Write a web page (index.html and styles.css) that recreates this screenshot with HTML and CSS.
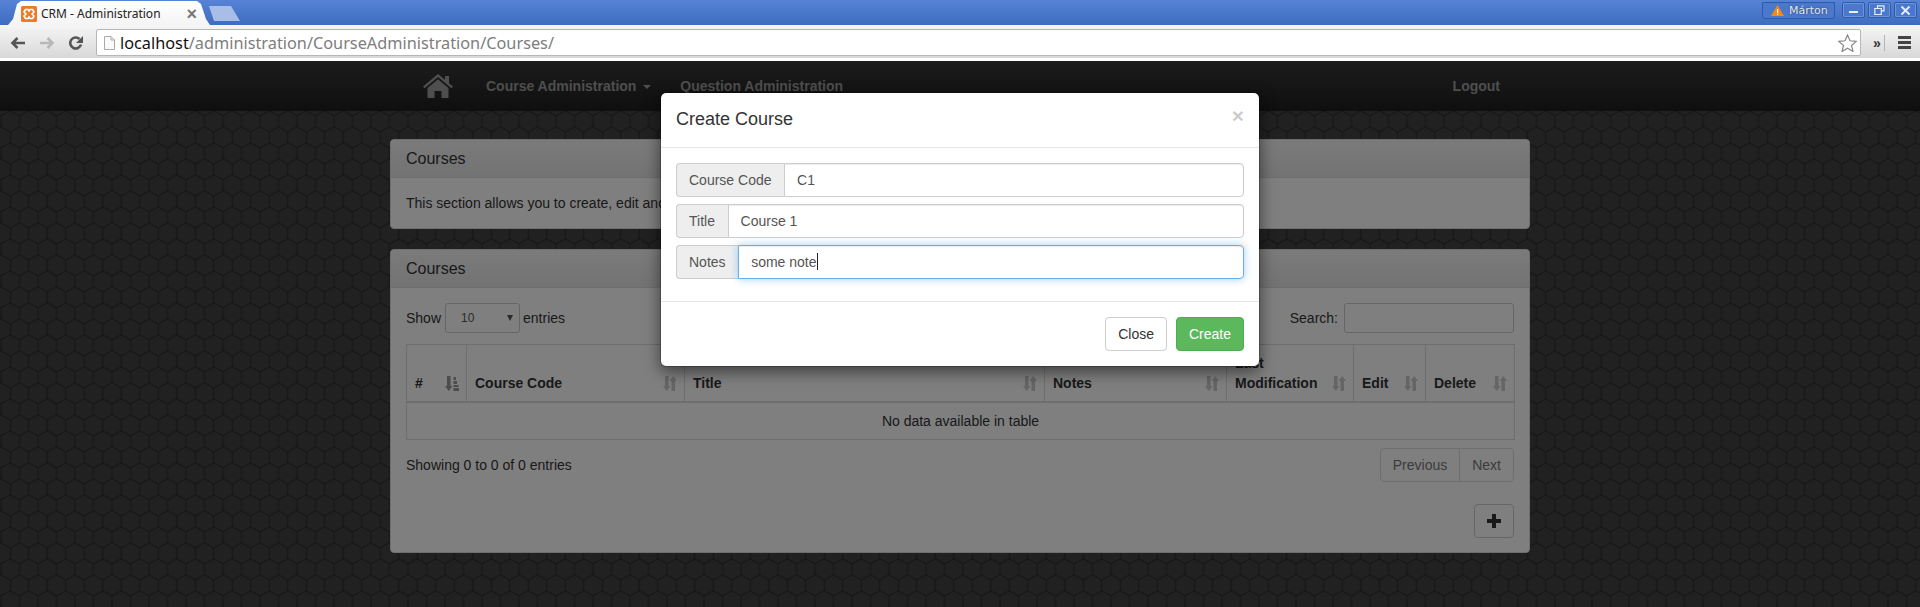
FILE: index.html
```html
<!DOCTYPE html>
<html lang="en">
<head>
  <meta charset="UTF-8" />
  <title>CRM - Administration</title>
  <link rel="stylesheet" href="styles.css">
</head>
<body>
  <div class="browser">
    <div class="tabbar">
      <div class="tab">
        <svg class="favicon" viewBox="0 0 16 16">
          <rect width="16" height="16" rx="1.5" fill="#ee7a26"/>
          <path d="M4.500 3.500H7L8 5l1-1.500h2.500L13 6l-2 2 2 2-1.500 2.500H9L8 11l-1 1.500H4.500L3 10l2-2-2-2z" fill="none" stroke="#fff" stroke-width="1.600"/>
        </svg>
        <span class="tab-title">CRM - Administration</span>
        <span class="tab-close">×</span>
      </div>
      <div class="newtab"></div>
      <div class="winbar">
        <div class="profile">
          <svg width="13" height="11" viewBox="0 0 13 11"><path d="M6.500 0L13 11H0z" fill="#f08a12"/><rect x="6" y="4" width="1.200" height="4" fill="#fff"/><rect x="6" y="8.800" width="1.200" height="1.200" fill="#fff"/></svg>
          <span>Márton</span>
        </div>
        <div class="winbtn"><svg width="11" height="11" viewBox="0 0 11 11"><rect x="1" y="6" width="9" height="2" fill="#e8eefa"/></svg></div>
        <div class="winbtn"><svg width="11" height="11" viewBox="0 0 11 11"><path d="M3.500 3V.8h6.500v5H7.500M.8 3.500h6.500v6H.8z" fill="none" stroke="#e8eefa" stroke-width="1.200"/></svg></div>
        <div class="winbtn"><svg width="11" height="11" viewBox="0 0 11 11"><path d="M1.500 1.500l8 8M9.500 1.500l-8 8" stroke="#e8eefa" stroke-width="1.800"/></svg></div>
      </div>
    </div>
    <div class="toolbar">
      <svg class="navicon" viewBox="0 0 16 14"><path d="M15 7H3M7.500 2L2.500 7l5 5" fill="none" stroke="#555" stroke-width="2.600"/></svg>
      <svg class="navicon fwd" viewBox="0 0 16 14"><path d="M1 7h12M8.500 2l5 5-5 5" fill="none" stroke="#b8b8b8" stroke-width="2.600"/></svg>
      <svg class="navicon reload" viewBox="0 0 16 16"><path d="M13 9.500A5.500 5.500 0 1 1 11.500 4" fill="none" stroke="#555" stroke-width="2.600"/><path d="M15 1v7H8z" fill="#555"/></svg>
      <div class="omnibox">
        <svg class="pageicon" width="11" height="14" viewBox="0 0 11 14"><path d="M.5.500h6.500l3.500 3.500v9.500H.5z" fill="#fafafa" stroke="#aaa"/><path d="M7 .500V4h3.500" fill="none" stroke="#aaa"/></svg>
        <span class="url"><span class="host">localhost</span>/administration/CourseAdministration/Courses/</span>
        <svg class="star" width="19" height="18" viewBox="0 0 19 18"><path d="M9.500 1l2.500 5.800 6.300.6-4.800 4.100 1.500 6-5.500-3.200L4 17.500l1.500-6L.7 7.400 7 6.800z" fill="#fff" stroke="#888" stroke-width="1.200"/></svg>
      </div>
      <span class="chevrons">»</span>
      <div class="menu-btn"><i></i><i></i><i></i></div>
    </div>
  </div>

  <div class="page">
    <svg class="hexbg" width="100%" height="100%">
      <defs>
        <pattern id="hex" width="18.500" height="32" patternUnits="userSpaceOnUse" patternTransform="translate(1 23)">
          <path d="M0 0V10.670L9.250 16 18.500 10.670V0M9.250 16V26.670L0 32M9.250 26.670L18.500 32" fill="none" stroke="#2c2c2c" stroke-width="1.100"/>
        </pattern>
      </defs>
      <rect width="100%" height="100%" fill="#424242"/>
      <rect width="100%" height="100%" fill="url(#hex)"/>
    </svg>

    <nav class="topnav">
      <div class="container navrow">
        <svg class="home" width="30" height="24" viewBox="0 0 30 24">
          <path d="M0 12.500L15 0l7 5.800V2h4v7.200l4 3.300-1.500 1.800L15 3 1.500 14.300z" fill="#9d9d9d"/>
          <path d="M4.500 14L15 5.200 25.500 14v10h-7v-7h-7v7h-7z" fill="#9d9d9d"/>
        </svg>
        <a class="navlink">Course Administration <b class="caret"></b></a>
        <a class="navlink">Question Administration</a>
        <a class="navlink logout">Logout</a>
      </div>
    </nav>

    <main class="container content">
      <section class="panel">
        <div class="panel-heading">Courses</div>
        <div class="panel-body intro">This section allows you to create, edit and delete courses.</div>
      </section>

      <section class="panel">
        <div class="panel-heading">Courses</div>
        <div class="panel-body">
          <div class="dt-top">
            <label class="dt-length">Show<span class="dt-select">10<b></b></span>entries</label>
            <label class="dt-search">Search:<input type="text" class="dt-input"></label>
          </div>

          <table class="dt">
            <colgroup>
              <col class="c-num"><col class="c-code"><col class="c-title"><col class="c-notes"><col class="c-mod"><col class="c-edit"><col class="c-del">
            </colgroup>
            <thead>
              <tr>
                <th><div class="th-in">#<svg class="sort active" viewBox="0 0 14 15"><use href="#sort-attr"/></svg></div></th>
                <th><div class="th-in">Course Code<svg class="sort" viewBox="0 0 14 15"><use href="#sort-any"/></svg></div></th>
                <th><div class="th-in">Title<svg class="sort" viewBox="0 0 14 15"><use href="#sort-any"/></svg></div></th>
                <th><div class="th-in">Notes<svg class="sort" viewBox="0 0 14 15"><use href="#sort-any"/></svg></div></th>
                <th><div class="th-in"><span>Last<br>Modification</span><svg class="sort" viewBox="0 0 14 15"><use href="#sort-any"/></svg></div></th>
                <th><div class="th-in">Edit<svg class="sort" viewBox="0 0 14 15"><use href="#sort-any"/></svg></div></th>
                <th><div class="th-in">Delete<svg class="sort" viewBox="0 0 14 15"><use href="#sort-any"/></svg></div></th>
              </tr>
            </thead>
            <tbody>
              <tr><td colspan="7">No data available in table</td></tr>
            </tbody>
          </table>

          <div class="dt-bottom">
            <span>Showing 0 to 0 of 0 entries</span>
            <div class="pager"><a>Previous</a><a>Next</a></div>
          </div>

          <div class="add-row">
            <button class="add-btn"><svg width="14" height="14" viewBox="0 0 14 14"><path d="M5 0h4v5h5v4H9v5H5V9H0V5h5z" fill="#333"/></svg></button>
          </div>
        </div>
      </section>
    </main>

    <svg width="0" height="0" class="defs">
      <symbol id="sort-any" viewBox="0 0 14 15">
        <path d="M2 0h3.500v10H7.500L3.750 15 0 10h2zM8.500 15h3.500V5h2L10.250 0 6.500 5h2z"/>
      </symbol>
      <symbol id="sort-attr" viewBox="0 0 14 15">
        <path d="M2 0h3.500v10H7.500L3.750 15 0 10h2zM8.500 1h2.500v3H8.500zM8.500 5h3.500v3H8.500zM8.500 9h5v2H8.500zM8.500 12h5.500v3H8.500z"/>
      </symbol>
    </svg>

    <div class="backdrop"></div>

    <div class="modal">
      <div class="modal-header">
        <h4>Create Course</h4>
        <span class="modal-x">×</span>
      </div>
      <div class="modal-body">
        <div class="input-group">
          <span class="addon">Course Code</span>
          <input class="form-control" type="text" value="C1">
        </div>
        <div class="input-group">
          <span class="addon">Title</span>
          <input class="form-control" type="text" value="Course 1">
        </div>
        <div class="input-group">
          <span class="addon">Notes</span>
          <div class="form-control focused">some note<i class="text-caret"></i></div>
        </div>
      </div>
      <div class="modal-footer">
        <button class="btn">Close</button>
        <button class="btn btn-success">Create</button>
      </div>
    </div>
  </div>
</body>
</html>
```

FILE: styles.css
```css
* {
  box-sizing: border-box;
}
html, body {
  margin: 0;
  height: 607px;
  overflow: hidden;
}
body {
  font-family: "Liberation Sans", Arial, sans-serif;
  font-size: 14px;
  line-height: 20px;
  color: #333;
}

/* browser window */
.browser {
  height: 61px;
  background: #fff;
}
.tabbar {
  display: flex;
  height: 25px;
  padding-left: 8px;
  background: linear-gradient(#5683d6, #3e6cbf);
}
.tab {
  display: flex;
  align-items: center;
  width: 202px;
  height: 25px;
  padding: 2px 0 0 13px;
  background: linear-gradient(#fff, #f4f4f4);
  clip-path: polygon(0 25px, 5px 19px, 9px 4px, 13px 1px, 189px 1px, 193px 4px, 198px 19px, 202px 25px);
}
.favicon {
  width: 16px;
  height: 16px;
  flex: none;
}
.tab-title {
  margin-left: 4px;
  font-family: "Noto Sans", sans-serif;
  font-size: 12px;
  color: #222;
  white-space: nowrap;
}
.tab-close {
  margin-left: 26px;
  font-size: 18px;
  font-weight: bold;
  color: #777;
}
.newtab {
  width: 31px;
  height: 15px;
  margin: 6px 0 0 -1px;
  background: #a9bee7;
  clip-path: polygon(0 0, 22px 0, 31px 15px, 5px 15px);
}
.winbar {
  display: flex;
  align-items: flex-start;
  gap: 3px;
  margin-left: auto;
  padding: 2px 3px 0 0;
}
.profile {
  display: flex;
  align-items: center;
  gap: 5px;
  width: 73px;
  height: 17px;
  margin-right: 4px;
  padding-left: 8px;
  border: 1px solid #2f5aa6;
  border-radius: 0 0 3px 3px;
  background: #4a78cc;
  font-family: "DejaVu Sans", sans-serif;
  font-size: 11px;
  color: #e6e6e6;
  text-shadow: 0 0 2px #1d3c75;
}
.winbtn {
  display: flex;
  align-items: center;
  justify-content: center;
  width: 23px;
  height: 16px;
  border: 1px solid #2f5aa6;
  border-radius: 2px;
  background: #4a78cc;
  box-shadow: inset 0 0 0 1px #6d94dc;
}
.toolbar {
  display: flex;
  align-items: center;
  height: 33px;
  margin-bottom: 3px;
  padding-top: 2px;
  background: linear-gradient(#f6f6f6, #d8d8d8);
}
.navicon {
  width: 16px;
  height: 14px;
  margin-left: 10px;
  flex: none;
}
.navicon.fwd {
  margin-left: 13px;
}
.navicon.reload {
  width: 16px;
  height: 16px;
  margin-left: 13px;
}
.omnibox {
  display: flex;
  align-items: center;
  width: 1765px;
  height: 27px;
  margin-left: 12px;
  padding: 0 3px 0 7px;
  border: 1px solid #b6b6b6;
  border-radius: 2px;
  background: #fff;
  flex: none;
}
.pageicon {
  flex: none;
}
.url {
  margin-left: 5px;
  font-family: "Noto Sans", sans-serif;
  font-size: 16.300px;
  color: #7d7d7d;
  white-space: nowrap;
}
.host {
  color: #111;
}
.star {
  margin-left: auto;
}
.chevrons {
  width: 24px;
  padding-left: 12px;
  font-size: 14px;
  font-weight: bold;
  color: #333;
  border-right: 1px solid #b5b5b5;
  line-height: 16px;
  flex: none;
}
.menu-btn {
  display: flex;
  flex-direction: column;
  gap: 2px;
  margin-left: 13px;
}
.menu-btn i {
  display: block;
  width: 13px;
  height: 3px;
  background: #444;
}

/* page */
.page {
  position: relative;
  height: 546px;
  overflow: hidden;
}
.hexbg {
  position: absolute;
  top: 0;
  left: 0;
}
.defs {
  position: absolute;
}
.container {
  width: 1140px;
  margin: 0 auto;
}
.topnav {
  position: relative;
  height: 50px;
  background: linear-gradient(#383838, #1e1e1e);
}
.navrow {
  display: flex;
  align-items: center;
  height: 50px;
  padding: 0 30px 0 33px;
}
.home {
  margin-right: 33px;
  flex: none;
}
.navlink {
  margin-right: 29px;
  font-weight: bold;
  color: #9d9d9d;
}
.caret {
  display: inline-block;
  width: 0;
  height: 0;
  margin-left: 3px;
  vertical-align: middle;
  border-top: 4px solid #9d9d9d;
  border-left: 4px solid transparent;
  border-right: 4px solid transparent;
}
.logout {
  margin: 0 0 0 auto;
}
.content {
  position: relative;
  display: flex;
  flex-direction: column;
  gap: 20px;
  padding-top: 28px;
}
.panel {
  border: 1px solid #ddd;
  border-radius: 4px;
  background: #fff;
}
.panel-heading {
  height: 38px;
  padding: 9px 15px;
  border-bottom: 1px solid #ddd;
  border-radius: 3px 3px 0 0;
  background: linear-gradient(#f6f6f6, #e6e6e6);
  font-size: 16px;
}
.panel-body {
  padding: 15px 15px 14px;
}
.panel-body.intro {
  padding: 15px;
}
.dt-top {
  display: flex;
  justify-content: space-between;
  align-items: center;
  height: 30px;
}
.dt-length, .dt-search {
  display: flex;
  align-items: center;
}
.dt-select {
  display: flex;
  align-items: center;
  justify-content: space-between;
  width: 75px;
  height: 30px;
  margin: 0 3px 0 4px;
  padding: 0 6px 0 15px;
  border: 1px solid #ccc;
  border-radius: 3px;
  font-size: 12px;
  color: #555;
}
.dt-select b {
  width: 0;
  height: 0;
  border-top: 6px solid #555;
  border-left: 3px solid transparent;
  border-right: 3px solid transparent;
}
.dt-input {
  width: 170px;
  height: 30px;
  margin-left: 6px;
  border: 1px solid #ccc;
  border-radius: 3px;
  background: #fff;
}
.dt {
  width: 1108px;
  margin-top: 11px;
  table-layout: fixed;
  border-collapse: collapse;
}
.c-num { width: 60px; }
.c-code { width: 218px; }
.c-title { width: 360px; }
.c-notes { width: 182px; }
.c-mod { width: 127px; }
.c-edit { width: 72px; }
.c-del { width: 89px; }
.dt th {
  padding: 8px;
  border: 1px solid #ddd;
  border-bottom: 2px solid #ddd;
  text-align: left;
  vertical-align: bottom;
}
.th-in {
  display: flex;
  align-items: flex-end;
  justify-content: space-between;
}
.sort {
  width: 14px;
  height: 15px;
  margin: 0 -1px 2px 0;
  flex: none;
  fill: #333;
  opacity: .25;
}
.sort.active {
  opacity: .5;
}
.dt td {
  height: 37px;
  padding: 8px;
  border: 1px solid #ddd;
  text-align: center;
}
.dt-bottom {
  display: flex;
  justify-content: space-between;
  align-items: center;
  margin-top: 8px;
}
.pager {
  display: flex;
  border: 1px solid #ddd;
  border-radius: 4px;
  color: #777;
}
.pager a {
  height: 32px;
  padding: 6px 12px;
}
.pager a + a {
  border-left: 1px solid #ddd;
}
.add-row {
  display: flex;
  justify-content: flex-end;
  margin-top: 22px;
}
.add-btn {
  display: flex;
  align-items: center;
  justify-content: center;
  width: 40px;
  height: 34px;
  padding: 0;
  border: 1px solid #ccc;
  border-radius: 4px;
  background: #fff;
}

/* modal over the page */
.backdrop {
  position: absolute;
  top: 0;
  left: 0;
  right: 0;
  bottom: 0;
  background: rgba(0, 0, 0, .5);
}
.modal {
  position: absolute;
  top: 31px;
  left: 660px;
  width: 600px;
  border: 1px solid rgba(0, 0, 0, .2);
  border-radius: 6px;
  background: #fff;
  background-clip: padding-box;
  box-shadow: 0 5px 15px rgba(0, 0, 0, .5);
}
.modal-header {
  display: flex;
  justify-content: space-between;
  height: 55px;
  padding: 13px 15px;
  border-bottom: 1px solid #e5e5e5;
}
.modal-header h4 {
  margin: 0;
  font-size: 18px;
  font-weight: normal;
  line-height: 26px;
}
.modal-x {
  margin-top: -1px;
  font-size: 21px;
  font-weight: bold;
  line-height: 21px;
  color: #000;
  opacity: .2;
}
.modal-body {
  display: flex;
  flex-direction: column;
  gap: 7px;
  padding: 15px 15px 22px;
}
.input-group {
  display: flex;
  height: 34px;
}
.addon {
  padding: 6px 12.600px 6px 12px;
  border: 1px solid #ccc;
  border-right: 0;
  border-radius: 4px 0 0 4px;
  background: #eee;
  color: #555;
  white-space: nowrap;
}
.form-control {
  flex: 1;
  min-width: 0;
  height: 34px;
  padding: 6px 12px;
  border: 1px solid #ccc;
  border-radius: 0 4px 4px 0;
  background: #fff;
  box-shadow: inset 0 1px 1px rgba(0, 0, 0, .075);
  font-family: inherit;
  font-size: 14px;
  line-height: 20px;
  color: #555;
  outline: none;
}
.form-control.focused {
  position: relative;
  border-color: #66afe9;
  box-shadow: inset 0 1px 1px rgba(0, 0, 0, .075), 0 0 8px rgba(102, 175, 233, .6);
}
.text-caret {
  display: inline-block;
  width: 1px;
  height: 17px;
  vertical-align: -3px;
  background: #222;
}
.modal-footer {
  display: flex;
  justify-content: flex-end;
  gap: 9px;
  padding: 15px;
  border-top: 1px solid #e5e5e5;
}
.btn {
  height: 34px;
  padding: 6px 12px;
  border: 1px solid #ccc;
  border-radius: 4px;
  background: #fff;
  font-family: inherit;
  font-size: 14px;
  line-height: 20px;
  color: #333;
}
.btn-success {
  border-color: #4cae4c;
  background: #5cb85c;
  color: #fff;
}
```
